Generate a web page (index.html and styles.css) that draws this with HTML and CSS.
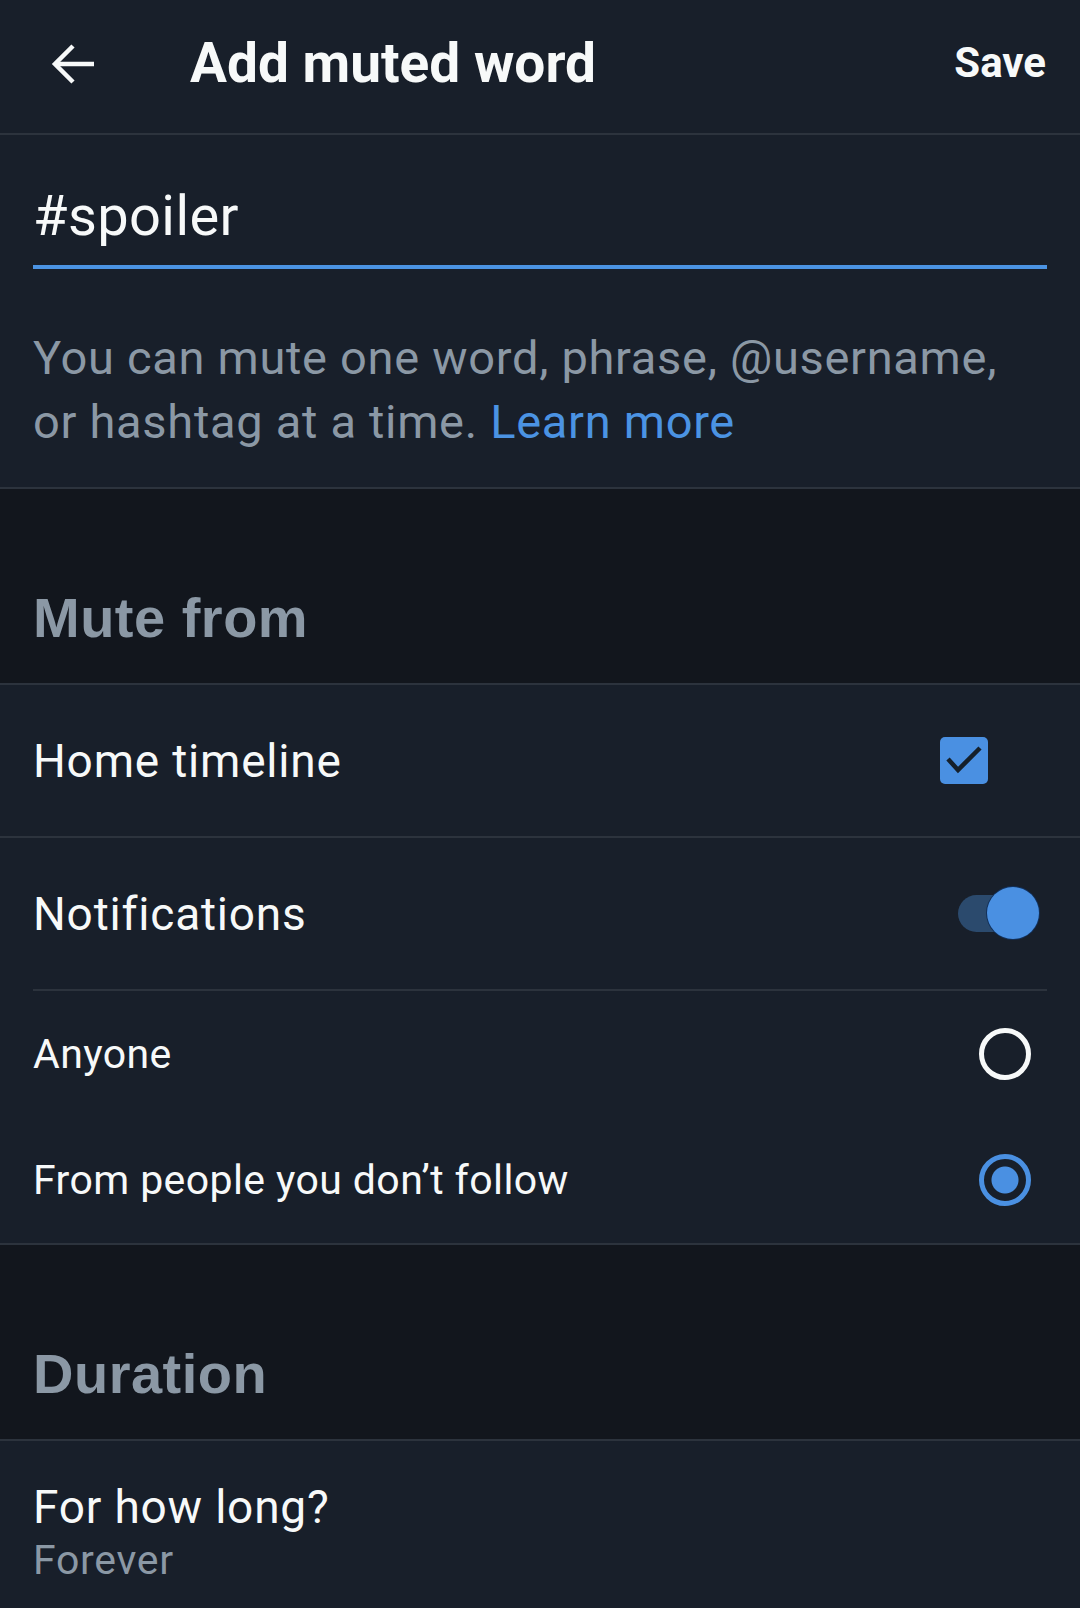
FILE: index.html
```html
<!DOCTYPE html>
<html lang="en">
<head>
    <meta charset="UTF-8">
    <meta name="viewport" content="width=device-width, initial-scale=1.0">
    <title>Add muted word</title>
    <link rel="stylesheet" href="styles.css">
</head>
<body>
    <div class="screen">
        <!-- Top bar -->
        <header class="topbar">
            <button class="back-btn" aria-label="Back">
                <svg width="46" height="42" viewBox="0 0 46 42" fill="none" stroke="#f7f9f9" stroke-width="4.5" stroke-linecap="butt" stroke-linejoin="miter">
                    <path d="M44 21H5"/>
                    <path d="M23 3L5 21l18 18"/>
                </svg>
            </button>
            <h1 class="title">Add muted word</h1>
            <span class="save">Save</span>
        </header>

        <!-- Word input -->
        <section class="word-entry">
            <div class="word-input">#spoiler</div>
            <p class="hint">You can mute one word, phrase, @username, or hashtag at a time. <a href="#">Learn more</a></p>
        </section>

        <!-- Mute from -->
        <div class="section-head">Mute from</div>

        <div class="row row-tall row-bordered">
            <span class="row-label">Home timeline</span>
            <span class="checkbox">
                <svg width="48" height="47" viewBox="0 0 48 47" fill="none" stroke="#15202b" stroke-width="4.5">
                    <path d="M8 22l10 11 22-22"/>
                </svg>
            </span>
        </div>

        <div class="row row-tall">
            <span class="row-label">Notifications</span>
            <span class="toggle"><span class="toggle-knob"></span></span>
        </div>

        <div class="options">
            <div class="row row-option">
                <span class="option-label">Anyone</span>
                <span class="radio"></span>
            </div>
            <div class="row row-option">
                <span class="option-label">From people you don’t follow</span>
                <span class="radio radio-on"></span>
            </div>
        </div>

        <!-- Duration -->
        <div class="section-head">Duration</div>

        <div class="duration">
            <div class="duration-title">For how long?</div>
            <div class="duration-value">Forever</div>
        </div>
    </div>
</body>
</html>
```

FILE: styles.css
```css
body {
    margin: 0;
    background-color: #181f2a;
    font-family: Roboto, "Liberation Sans", Arial, sans-serif;
    color: #f7f9f9;
}
.screen {
    width: 1080px;
    min-height: 1608px;
    background-color: #181f2a;
}
.topbar {
    display: flex;
    align-items: center;
    height: 125px;
    padding: 0 34px 8px 50px;
    border-bottom: 2px solid #2c333d;
}
.back-btn {
    display: flex;
    padding: 0;
    background: none;
    border: none;
    margin-top: 2px;
}
.title {
    flex: 1;
    margin: 0 0 0 94px;
    font-size: 55px;
    font-weight: 700;
    line-height: 64px;
}
.save {
    font-size: 42px;
    font-weight: 700;
    line-height: 48px;
}
.word-entry {
    padding: 46px 33px 33px;
    border-bottom: 2px solid #2c333d;
}
.word-input {
    font-size: 56px;
    line-height: 70px;
    letter-spacing: 0.4px;
    padding-bottom: 14px;
    border-bottom: 4px solid #4b93e3;
}
.hint {
    max-width: 990px;
    margin: 57px 0 0;
    font-size: 47px;
    line-height: 64px;
    letter-spacing: 0.7px;
    color: #8b98a5;
}
.hint a {
    color: #4b93e3;
    text-decoration: none;
}
.section-head {
    display: flex;
    align-items: flex-end;
    height: 161px;
    padding: 0 33px 33px;
    background-color: #12161d;
    border-bottom: 2px solid #2c333d;
    font-family: "Liberation Sans", Arial, sans-serif;
    font-size: 56px;
    font-weight: 700;
    line-height: 64px;
    letter-spacing: 0.5px;
    color: #8b98a5;
}
.row {
    display: flex;
    align-items: center;
    justify-content: space-between;
    padding: 0 33px;
}
.row-tall {
    height: 151px;
}
.row-bordered {
    border-bottom: 2px solid #2c333d;
}
.row-label {
    font-size: 46px;
    line-height: 56px;
    letter-spacing: 0.8px;
}
.checkbox {
    display: flex;
    width: 48px;
    height: 47px;
    margin-right: 59px;
    background-color: #4a90e2;
    border-radius: 5px;
}
.toggle {
    position: relative;
    width: 72px;
    height: 37px;
    margin-right: 17px;
    border-radius: 19px;
    background-color: #2b4a6d;
}
.toggle-knob {
    position: absolute;
    top: -8px;
    right: -9px;
    width: 52px;
    height: 52px;
    border-radius: 50%;
    background-color: #4a90e2;
    box-shadow: 0 0 0 1px #12305a;
}
.options {
    border-bottom: 2px solid #2c333d;
}
.options::before {
    content: "";
    display: block;
    height: 2px;
    margin: 0 33px;
    background-color: #2c333d;
}
.row-option {
    height: 126px;
}
.option-label {
    font-size: 41px;
    line-height: 50px;
    letter-spacing: 0.4px;
}
.radio {
    box-sizing: border-box;
    width: 52px;
    height: 52px;
    margin-right: 16px;
    border: 5px solid #f7f9f9;
    border-radius: 50%;
}
.radio-on {
    border-color: #4a90e2;
    background: radial-gradient(circle, #4a90e2 0, #4a90e2 13px, transparent 14px);
}
.duration {
    padding: 39px 33px 0;
}
.duration-title {
    font-size: 46px;
    line-height: 54px;
    letter-spacing: 0.8px;
}
.duration-value {
    font-size: 41px;
    line-height: 52px;
    letter-spacing: 0.7px;
    color: #8b98a5;
}
```
